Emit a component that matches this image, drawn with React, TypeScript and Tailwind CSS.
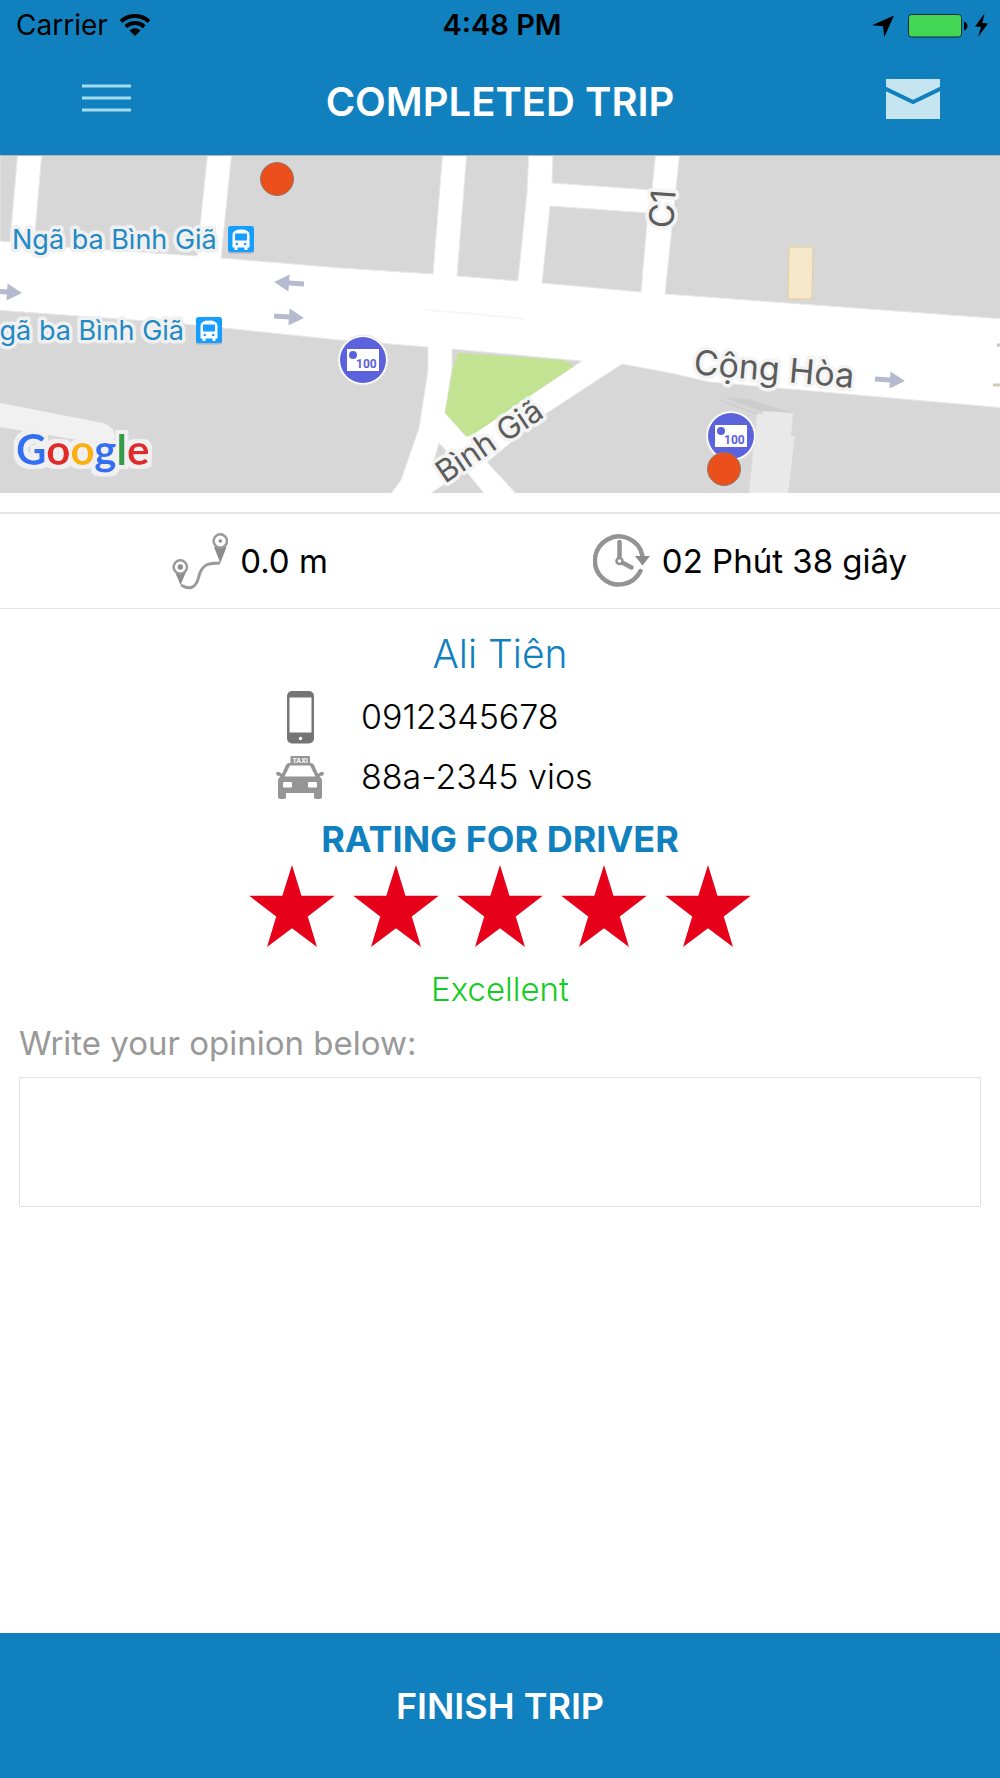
import { useState } from "react";

const RATINGS = ["Very bad", "Bad", "Average", "Good", "Excellent"];

// City blocks, drawn over the white street surface
const BLOCKS = [
  "0,-5 18,-5 10,87 0,86",
  "42,-5 208,-5 197,101 34,90",
  "232,-5 443,-5 433,119 340,113 221,103",
  "467,-5 529,-5 527,38 518,126 457,121",
  "553,-5 656,-5 652,35 552,28",
  "550,51 648,58 641,137 542,128",
  "680,-5 1005,-5 1005,164 665,139",
  "-5,155 175,168 340,185 428,192 428,215 419,273 401,325 388,343 -5,343",
  "439,288 453,303 433,309",
  "424,343 465,315 488,343",
  "452,194 582,206 467,282 445,258 452,213",
  "622,209 670,218 710,227 1005,253 1005,343 520,343 487,307 547,258",
];

function StatusBar() {
  return (
    <div className="grid h-[50px] grid-cols-3 items-center pr-3 pl-4 text-black">
      <div className="flex items-center gap-3 text-[28px] leading-8">
        Carrier
        <svg width="30" height="22" viewBox="0 0 30 22" fill="none" stroke="currentColor" strokeWidth="4">
          <path d="M1 7.500A20.500 20.500 0 0 1 29 7.500" />
          <path d="M5.800 12.700A13.500 13.500 0 0 1 24.200 12.700" />
          <path d="M15 22L9.500 16.500A8 8 0 0 1 20.500 16.500Z" fill="currentColor" stroke="none" />
        </svg>
      </div>
      <div className="text-center text-[29px] leading-8 font-semibold">4:48 PM</div>
      <div className="flex items-center justify-end">
        <svg width="116" height="25" viewBox="872 12 116 25">
          <path d="M872 24.300L894 14.500L884.300 36L883 25.200Z" />
          <rect x="908.500" y="13.500" width="53" height="22.500" rx="3" fill="#44d655" stroke="#0b2b3c" />
          <path d="M964 20.500Q967.500 22 967.500 24.700Q967.500 28 964 29.500Z" />
          <path d="M984.500 12.500L975 25.500L981 26L978 36L988 22.500L982.300 22Z" />
        </svg>
      </div>
    </div>
  );
}

function RoadArrow({ x, y, angle }: { x: number; y: number; angle: number }) {
  return (
    <path
      transform={`translate(${x} ${y}) rotate(${angle})`}
      d="M-15 -2.500H0V-8.500L15 0L0 8.500V2.500H-15Z"
      fill="#b5bacf"
    />
  );
}

function BusStop({ x, y }: { x: number; y: number }) {
  return (
    <g transform={`translate(${x} ${y})`}>
      <rect y="1.500" width="26" height="26" rx="2.500" fill="#a9b4bd" />
      <rect width="26" height="26" rx="2.500" fill="#149eff" />
      <path d="M4.500 9Q4.500 3.500 13 3.500Q21.500 3.500 21.500 9V21.500H19.500V24H16.500V21.500H9.500V24H6.500V21.500H4.500Z" fill="#fff" />
      <rect x="7" y="7.500" width="12" height="7" fill="#149eff" />
      <circle cx="8.800" cy="18" r="1.300" fill="#149eff" />
      <circle cx="17.200" cy="18" r="1.300" fill="#149eff" />
    </g>
  );
}

function CashPoint({ x, y }: { x: number; y: number }) {
  return (
    <g transform={`translate(${x} ${y})`}>
      <circle r="25" fill="#fff" stroke="#e4e4e4" />
      <circle r="23" fill="#5b62dc" />
      <rect x="-16" y="-11" width="32" height="22" fill="#fff" />
      <circle cx="-10" cy="-5" r="4" fill="#5b62dc" />
      <text x="-7" y="8" fontSize="12" fontWeight="700" fill="#5b62dc" className="font-[Roboto,sans-serif]">
        100
      </text>
    </g>
  );
}

function TripMap() {
  return (
    <svg
      className="block h-[338px] w-full bg-white"
      viewBox="0 0 1000 338"
      preserveAspectRatio="xMidYMid slice"
      role="img"
      aria-label="Trip map"
    >
      <defs>
        <filter id="halo" x="-10%" y="-20%" width="120%" height="140%">
          <feMorphology in="SourceAlpha" operator="dilate" radius="4" result="grown" />
          <feFlood floodColor="#f0f0f0" />
          <feComposite in2="grown" operator="in" />
          <feMerge>
            <feMergeNode />
            <feMergeNode in="SourceGraphic" />
          </feMerge>
        </filter>
      </defs>

      {BLOCKS.map((points) => (
        <polygon key={points} points={points} fill="#d7d7d7" stroke="#e9e9e9" strokeWidth="1" />
      ))}
      <path d="M0 .5H1000" stroke="#bdb4b6" />
      <path d="M458 198L563 205L574 211L471 281L466 281L445 258L453 213Z" fill="#c2e392" />
      <path d="M425 155Q480 159 525 164" fill="none" stroke="#f5f5f5" strokeWidth="1.500" />
      <path d="M0 248L103 268Q115 272 115 282Q112 290 96 288L0 272Z" fill="#f1f1f1" />
      <path d="M789 92H813L812 144H788Z" fill="#f5e7ca" stroke="#e5cd9c" />

      {/* Tall building with its roof shadow */}
      <path d="M723 242L748 244L793 258L763 257Z" fill="#cdcdcd" />
      <path d="M719 245L758 259" stroke="#c9c9c9" />
      <path d="M757 259H763V256L793 258L791 281H795L788 338H749Z" fill="#e9e9e9" />

      <path d="M997 190H1000M993 230H1000" stroke="#cfc9b8" strokeWidth="3" />
      <RoadArrow x={7} y={137} angle={4} />
      <RoadArrow x={289} y={128} angle={184} />
      <RoadArrow x={289} y={162} angle={4} />
      <RoadArrow x={890} y={225} angle={4} />

      <g fontSize="27" fill="#2189c4" stroke="#f0f0f0" strokeWidth="7" strokeLinejoin="round" className="[paint-order:stroke]">
        <text x="12" y="94">Ngã ba Bình Giã</text>
        <text x="184" y="185" textAnchor="end">gã ba Bình Giã</text>
      </g>
      <g fill="#5c5c5c" stroke="#f4f4f4" strokeWidth="7" strokeLinejoin="round" className="[paint-order:stroke]">
        <text fontSize="34" transform="translate(693 219) rotate(5)">Cộng Hòa</text>
        <text fontSize="31" transform="translate(445 329) rotate(-34)">Bình Giã</text>
        <text fontSize="34" transform="translate(673 74) rotate(-86)">C1</text>
      </g>
      <BusStop x={228} y={71} />
      <BusStop x={196} y={162} />
      <CashPoint x={363} y={205} />
      <CashPoint x={731} y={281} />
      <g fill="#eb4f1c" stroke="#8d7a6c">
        <circle cx="277" cy="24" r="16.500" />
        <circle cx="724" cy="314" r="16.500" />
      </g>

      <text x="16" y="310" fontSize="42" fontWeight="700" filter="url(#halo)" className="font-[Lato,sans-serif]">
        <tspan fill="#316ff2">G</tspan>
        <tspan fill="#e12b29">o</tspan>
        <tspan fill="#f9b108">o</tspan>
        <tspan fill="#316ff2">g</tspan>
        <tspan fill="#319c46">l</tspan>
        <tspan fill="#e12b29">e</tspan>
      </text>
    </svg>
  );
}

function RouteIcon() {
  return (
    <svg width="56" height="58" viewBox="0 0 56 58" fill="none" stroke="#9a9a9a" strokeWidth="2.500">
      <path d="M9 53C17 58 24 57 27 44C30 32 37 31 48 31" strokeWidth="3" />
      <path d="M3 40L8.500 53L14 40Z" fill="#8c8c8c" stroke="none" />
      <circle cx="8.300" cy="35" r="6.700" fill="#fff" />
      <circle cx="8.300" cy="35" r="2.700" fill="#8c8c8c" stroke="none" />
      <path d="M42 15L48.300 31L54.500 15Z" fill="#8c8c8c" stroke="none" />
      <circle cx="48.300" cy="9" r="6.700" fill="#fff" />
      <circle cx="48.300" cy="9" r="1.800" fill="#8c8c8c" stroke="none" />
    </svg>
  );
}

function ClockIcon() {
  return (
    <svg width="57" height="56" viewBox="0 0 57 56" fill="none" stroke="#939393" strokeWidth="4.500" strokeLinecap="round">
      <path d="M47.500 38A24 24 0 1 1 49.500 23" />
      <path d="M42 23H57L49.500 32.500Z" fill="#8b8b8b" stroke="none" />
      <path d="M26.500 9V24M30 30L38.500 34.500" />
      <circle cx="26.500" cy="28" r="3" strokeWidth="2.500" />
    </svg>
  );
}

function PhoneIcon() {
  return (
    <svg width="27" height="53" viewBox="0 0 27 53">
      <rect width="27" height="52.500" rx="5" fill="#757575" />
      <rect x="2.500" y="6.500" width="22" height="35" fill="#fff" />
      <circle cx="13.500" cy="47.500" r="1.700" fill="#fff" />
    </svg>
  );
}

function TaxiIcon() {
  return (
    <svg width="48" height="43" viewBox="0 0 48 43" fill="#959595">
      <rect x="14.500" width="19.500" height="9" rx="1" />
      <text x="24.200" y="6.800" fontSize="6.500" fontWeight="700" fill="#fff" textAnchor="middle">TAXI</text>
      <path d="M13 7H35Q37 7 38 9L42 18Q47 14 48 17.500Q48 20 43.500 20Q46 22 46 26V41Q46 43 44 43H40Q38 43 38 41V37H10V41Q10 43 8 43H4Q2 43 2 41V26Q2 22 4.500 20Q0 20 0 17.500Q1 14 6 18L10 9Q11 7 13 7Z" />
      <path d="M14 9.500H34L39.500 20.500H8.500Z" fill="#fff" />
      <rect x="7" y="26" width="9" height="5.500" rx="1" fill="#fff" />
      <rect x="32" y="26" width="9" height="5.500" rx="1" fill="#fff" />
    </svg>
  );
}

export default function App() {
  const [rating, setRating] = useState(5);

  return (
    <div className="flex min-h-screen flex-col bg-white font-[Inter,'Noto_Sans',sans-serif] text-black">
      <header className="bg-[#1180be]">
        <StatusBar />
        <div className="grid h-[105px] grid-cols-[1fr_auto_1fr] items-center pr-[60px] pb-0.5 pl-[82px]">
          <button type="button" aria-label="Menu" className="justify-self-start pb-2">
            <svg width="49" height="28" viewBox="0 0 49 28" stroke="#a3dcec" strokeWidth="3">
              <path d="M0 2H49M0 14H49M0 26H49" />
            </svg>
          </button>
          <h1 className="mr-[22px] text-[40px] leading-[48px] font-semibold text-white">COMPLETED TRIP</h1>
          <button type="button" aria-label="Messages" className="justify-self-end pb-1.5">
            <svg width="54" height="40" viewBox="0 0 54 40">
              <rect width="54" height="40" fill="#c5e6f0" />
              <path d="M-2 9L27 23L56 9" fill="none" stroke="#1180be" strokeWidth="4" />
            </svg>
          </button>
        </div>
      </header>

      <TripMap />

      {/* Trip stats */}
      <div className="mt-[19px] grid h-[97px] grid-cols-2 border-t-2 border-b border-[#e5e5e5] text-[33px] leading-10">
        <div className="flex items-center justify-center gap-3">
          <RouteIcon />
          0.0 m
        </div>
        <div className="flex items-center justify-center gap-3">
          <ClockIcon />
          02 Phút 38 giây
        </div>
      </div>

      {/* Driver */}
      <section className="flex flex-col items-center pt-5">
        <h2 className="text-[39px] leading-[50px] font-light text-[#1180be]">Ali Tiên</h2>
        <div className="mt-2 grid w-[448px] max-w-full grid-cols-[48px_1fr] items-center gap-x-[37px] text-[34px] leading-[60px] font-light">
          <span className="flex justify-center">
            <PhoneIcon />
          </span>
          0912345678
          <span className="flex justify-center">
            <TaxiIcon />
          </span>
          88a-2345 vios
        </div>
        <h3 className="mt-2.5 text-[36px] leading-[44px] font-bold text-[#1180be]">RATING FOR DRIVER</h3>
        <div className="mt-1 flex gap-[18px]">
          {RATINGS.map((name, i) => (
            <button key={name} type="button" aria-label={name} onClick={() => setRating(i + 1)}>
              <svg width="86" height="82" viewBox="0 0 84 80.500" fill={i < rating ? "#e6001a" : "#d7d7d7"}>
                <path d="M42 0L51.300 30.300H84L57.500 50.500L66.500 80.500L42 62L17.500 80.500L26.500 50.500L0 30.300H32.500Z" />
              </svg>
            </button>
          ))}
        </div>
        <p className="mt-5 text-[33px] leading-[44px] font-light text-[#12cc22]">{RATINGS[rating - 1]}</p>
      </section>

      {/* Opinion */}
      <div className="px-[19px] pt-2.5">
        <label htmlFor="opinion" className="block text-[33px] leading-[44px] text-[#999]">
          Write your opinion below:
        </label>
        <textarea id="opinion" className="mt-3 block h-[130px] w-full resize-none border border-[#e3e3e3] p-3 text-[33px] leading-10 outline-none" />
      </div>

      <button type="button" className="mt-auto h-[145px] w-full bg-[#1180be] text-[36px] font-semibold text-white">
        FINISH TRIP
      </button>
    </div>
  );
}
